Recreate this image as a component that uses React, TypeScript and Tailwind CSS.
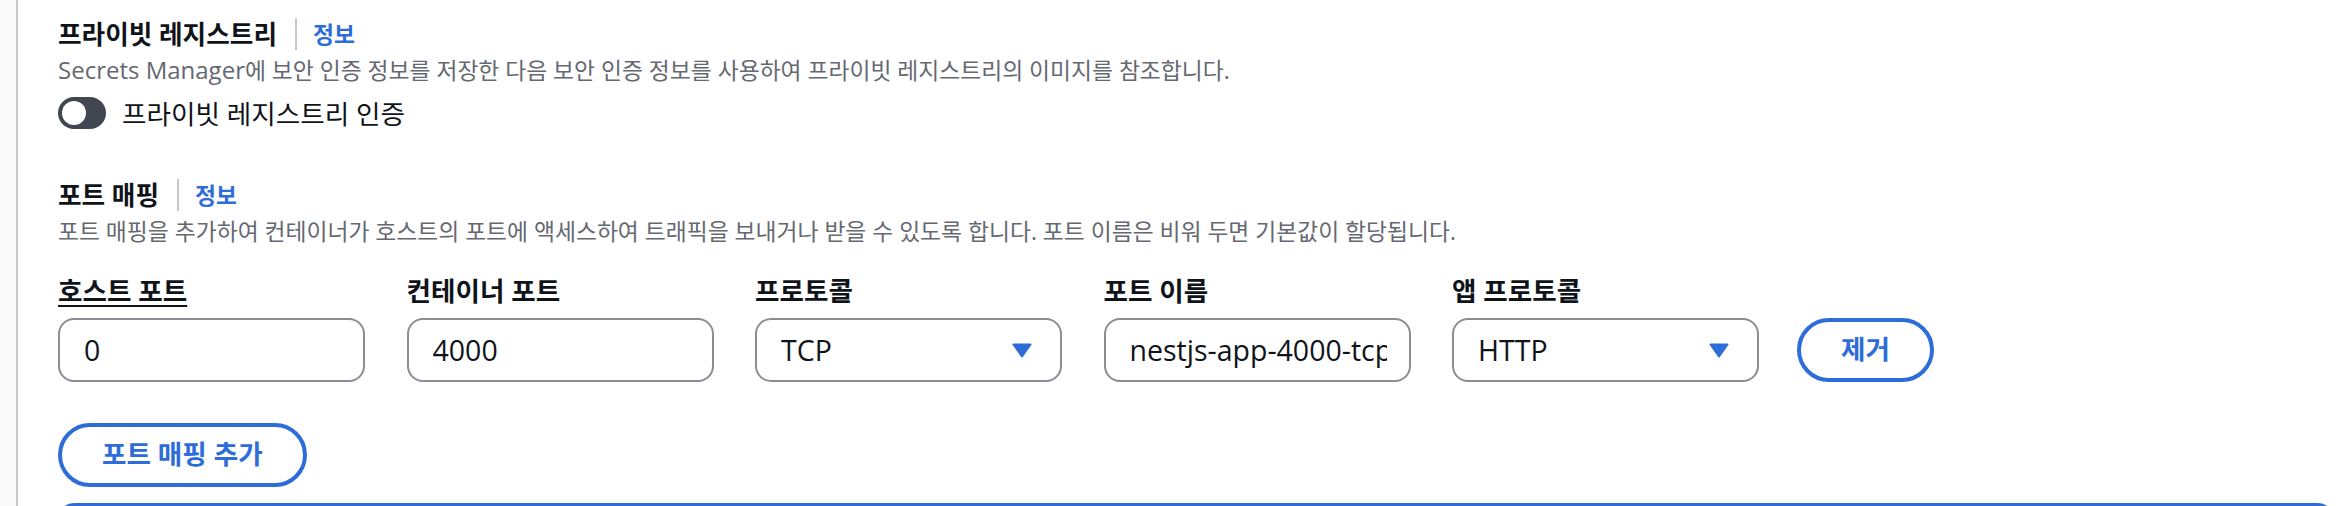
import React from "react";

const BLUE = "#2d6cd9";

function K({ children }: { children: React.ReactNode }) {
  return <span className="text-[0.95em]">{children}</span>;
}

function Caret() {
  return (
    <svg width="20" height="15" viewBox="0 0 20 15" className="shrink-0">
      <path d="M1.5 1.5 H18.5 L10 13.5 Z" fill={BLUE} stroke={BLUE} strokeWidth="2" strokeLinejoin="round" />
    </svg>
  );
}

function Heading({ title }: { title: string }) {
  return (
    <div className="flex h-[40px] items-center">
      <span className="text-[27px] font-bold leading-[40px] text-[#0f141a]">
        <K>{title}</K>
      </span>
      <span className="ml-[18px] mr-[16px] h-[32px] w-[2px] bg-[#c6c6cd]" />
      <span className="text-[24px] font-bold leading-[40px]" style={{ color: BLUE }}>
        <K>정보</K>
      </span>
    </div>
  );
}

function Field({
  label,
  value,
  select,
  underline,
}: {
  label: string;
  value: string;
  select?: boolean;
  underline?: boolean;
}) {
  return (
    <div className="flex w-[307px] flex-col">
      <div className="h-[40px] text-[28px] font-bold leading-[40px] text-[#0f141a]">
        <span className={underline ? "underline decoration-[2px] underline-offset-[4px]" : ""}>
          <K>{label}</K>
        </span>
      </div>
      <div
        className={
          "mt-[8px] flex h-[64px] items-center overflow-hidden rounded-[16px] border-2 border-[#8c8c94] bg-white text-[28.5px] text-[#0f141a] " +
          (select ? "pl-[24px] pr-[28px]" : "pl-[24px] pr-[22px]")
        }
      >
        <span className="flex-1 overflow-hidden whitespace-nowrap">{value}</span>
        {select && <Caret />}
      </div>
    </div>
  );
}

export default function App() {
  return (
    <div
      className="flex h-[506px] w-[2338px] overflow-hidden bg-white"
      style={{ fontFamily: '"Open Sans", "Noto Sans CJK KR", sans-serif' }}
    >
      <div className="w-[16px] shrink-0 bg-[#fafafa]" />
      <div className="w-[2px] shrink-0 bg-[#c6c6cd]" />
      <div className="flex flex-1 flex-col pl-[40px] pr-[4px] pt-[14px]">
        <Heading title="프라이빗 레지스트리" />
        <div className="text-[24px] leading-[32px] text-[#656871]">
          <span>Secrets Manager</span>
          <K>에 보안 인증 정보를 저장한 다음 보안 인증 정보를 사용하여 프라이빗 레지스트리의 이미지를 참조합니다.</K>
        </div>
        <div className="mt-[6px] flex h-[40px] items-center">
          <div className="flex h-[32px] w-[48px] items-center rounded-full bg-[#424650] pl-[4px]">
            <div className="h-[24px] w-[24px] rounded-full bg-white" />
          </div>
          <span className="ml-[16px] text-[28px] leading-[40px] text-[#0f141a]">
            <K>프라이빗 레지스트리 인증</K>
          </span>
        </div>

        <div className="mt-[42px]">
          <Heading title="포트 매핑" />
        </div>
        <div className="text-[24px] leading-[32px] text-[#656871]">
          <K>
            포트 매핑을 추가하여 컨테이너가 호스트의 포트에 액세스하여 트래픽을 보내거나 받을 수 있도록 합니다. 포트 이름은 비워 두면 기본값이 할당됩니다.
          </K>
        </div>

        <div className="mt-[22px] flex items-end">
          <div className="flex gap-[41.5px]">
            <Field label="호스트 포트" value="0" underline />
            <Field label="컨테이너 포트" value="4000" />
            <Field label="프로토콜" value="TCP" select />
            <Field label="포트 이름" value="nestjs-app-4000-tcp" />
            <Field label="앱 프로토콜" value="HTTP" select />
          </div>
          <button
            className="ml-[38px] flex h-[64px] items-center rounded-full border-[4px] bg-white px-[40px] text-[28px] font-bold"
            style={{ borderColor: BLUE, color: BLUE }}
          >
            <K>제거</K>
          </button>
        </div>

        <div className="mt-[41px] flex">
          <button
            className="flex h-[64px] items-center rounded-full border-[4px] bg-white px-[40px] text-[28px] font-bold"
            style={{ borderColor: BLUE, color: BLUE }}
          >
            <K>포트 매핑 추가</K>
          </button>
        </div>

        <div
          className="mt-[16px] h-[120px] shrink-0 rounded-[16px] border-[4px] bg-white"
          style={{ borderColor: BLUE }}
        />
      </div>
    </div>
  );
}
